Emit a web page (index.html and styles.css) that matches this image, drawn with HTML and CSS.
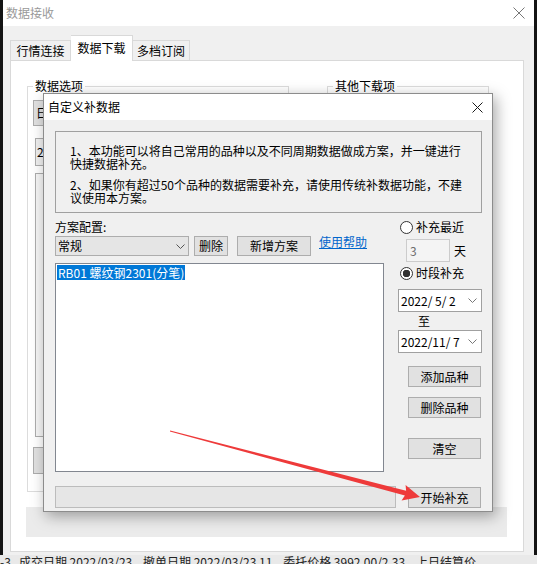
FILE: index.html
```html
<!DOCTYPE html>
<html lang="zh-CN">
<head>
    <meta charset="UTF-8">
    <title>数据接收</title>
    <link rel="stylesheet" href="styles.css">
</head>
<body>
    <div class="window">
        <div class="win-title">
            <span>数据接收</span>
            <svg class="win-close" width="12" height="12" viewBox="0 0 12 12">
                <path d="M0.5 0.5L11.5 11.5M11.5 0.5L0.5 11.5" stroke="#777" stroke-width="1"/>
            </svg>
        </div>
        <div class="tabs">
            <div class="tab tab-1">行情连接</div>
            <div class="tab tab-2 active">数据下载</div>
            <div class="tab tab-3">多档订阅</div>
        </div>
        <div class="panel">
            <div class="groups">
                <fieldset class="group group-data">
                    <legend>数据选项</legend>
                    <div class="g-btn">日线数据</div>
                    <div class="g-date">2022/ 5/ 2</div>
                    <div class="g-list"></div>
                    <div class="g-btn g-btn-low"></div>
                </fieldset>
                <fieldset class="group group-other">
                    <legend>其他下载项</legend>
                </fieldset>
            </div>
            <div class="progress"></div>
        </div>
    </div>
    <div class="behind">
        <span>-3&nbsp;&nbsp;&nbsp;成交日期 2022/03/23&nbsp;&nbsp;&nbsp;&nbsp;撤单日期 2022/03/23 11&nbsp;&nbsp;&nbsp;&nbsp;委托价格 3992.00/2.33&nbsp;&nbsp;&nbsp;&nbsp;上日结算价</span>
    </div>

    <div class="dialog">
        <div class="dlg-title">
            <span>自定义补数据</span>
            <svg width="11" height="11" viewBox="0 0 11 11">
                <path d="M0.5 0.5L10.5 10.5M10.5 0.5L0.5 10.5" stroke="#1a1a1a" stroke-width="1"/>
            </svg>
        </div>
        <div class="dlg-body">
            <div class="notice">
                <p>1、本功能可以将自己常用的品种以及不同周期数据做成方案，并一键进行<br>快捷数据补充。</p>
                <p>2、如果你有超过50个品种的数据需要补充，请使用传统补数据功能，不建<br>议使用本方案。</p>
            </div>
            <div class="main">
                <div class="left-col">
                    <div class="field-label">方案配置:</div>
                    <div class="combo-row">
                        <div class="combo">
                            <span>常规</span>
                            <svg width="9" height="5" viewBox="0 0 9 5"><path d="M0.5 0.5L4.5 4.5L8.5 0.5" fill="none" stroke="#555" stroke-width="1"/></svg>
                        </div>
                        <div class="btn btn-del">删除</div>
                        <div class="btn btn-new">新增方案</div>
                        <a class="help-link" href="#">使用帮助</a>
                    </div>
                    <div class="list">
                        <span class="list-item">RB01 螺纹钢2301(分笔)</span>
                    </div>
                    <div class="status"></div>
                </div>
                <div class="right-col">
                    <div class="radio-row">
                        <span class="radio"></span>
                        <span>补充最近</span>
                    </div>
                    <div class="days-row">
                        <div class="days-input">3</div>
                        <span>天</span>
                    </div>
                    <div class="radio-row radio-row-2">
                        <span class="radio checked"></span>
                        <span>时段补充</span>
                    </div>
                    <div class="date date-from">
                        <span>2022/ 5/ 2</span>
                        <svg width="9" height="5" viewBox="0 0 9 5"><path d="M0.5 0.5L4.5 4.5L8.5 0.5" fill="none" stroke="#777" stroke-width="1"/></svg>
                    </div>
                    <div class="date-to-label">至</div>
                    <div class="date date-to">
                        <span>2022/11/ 7</span>
                        <svg width="9" height="5" viewBox="0 0 9 5"><path d="M0.5 0.5L4.5 4.5L8.5 0.5" fill="none" stroke="#777" stroke-width="1"/></svg>
                    </div>
                    <div class="btn side-btn btn-add">添加品种</div>
                    <div class="btn side-btn btn-remove">删除品种</div>
                    <div class="btn side-btn btn-clear">清空</div>
                    <div class="btn side-btn btn-start">开始补充</div>
                </div>
            </div>
        </div>
    </div>

    <svg class="arrow" width="537" height="564" viewBox="0 0 537 564">
        <polygon points="170.1,430.5 406.1,490.8 405.6,484.9 420,497 401.6,500.4 404.9,495.6 169.9,431.5" fill="#ee3a3a"/>
    </svg>
</body>
</html>
```

FILE: styles.css
```css
* {
    margin: 0;
    padding: 0;
    box-sizing: border-box;
    font-family: "Noto Sans CJK SC", "Microsoft YaHei", sans-serif;
}

body {
    width: 537px;
    height: 564px;
    overflow: hidden;
    background-color: #141414;
    position: relative;
    font-size: 12px;
    color: #000;
}

/* outer window */
.window {
    margin-left: 3px;
    width: 531px;
    height: 555px;
    background-color: #f0f0f0;
    display: flex;
    flex-direction: column;
}

.win-title {
    height: 26px;
    background-color: #fff;
    display: flex;
    align-items: center;
    justify-content: space-between;
    padding: 0 9px 0 3px;
    color: #999;
    line-height: 14px;
}

.tabs {
    height: 34px;
    display: flex;
    align-items: flex-end;
    padding-left: 7px;
}

.tab {
    height: 20px;
    border: 1px solid #d9d9d9;
    border-bottom: none;
    background-color: #f0f0f0;
    display: flex;
    align-items: center;
    justify-content: center;
    line-height: 14px;
}

.tab-1 { width: 61px; }
.tab-2 { width: 62px; }
.tab-3 { width: 57px; border-left: none; }

.tab.active {
    height: 26px;
    background-color: #fff;
    margin-bottom: -1px;
    position: relative;
    z-index: 1;
    border-left: none;
    padding-bottom: 2px;
}

.panel {
    margin-left: 7px;
    width: 514px;
    height: 492px;
    background-color: #fff;
    border: 1px solid #d9d9d9;
    padding: 18px 0 0 16px;
}

.groups {
    display: flex;
    align-items: flex-start;
}

.group {
    border: 1px solid #dcdcdc;
    padding: 0 5px;
    height: 413px;
}

.group legend {
    padding: 0 2px;
    line-height: 14px;
}

.group-data {
    width: 262px;
}

.group-other {
    width: 162px;
    margin-left: 38px;
}

.g-btn {
    margin-top: 7px;
    width: 70px;
    height: 26px;
    background-color: #e1e1e1;
    border: 1px solid #adadad;
    padding-left: 2px;
    line-height: 24px;
}

.g-btn-low {
    margin-top: 10px;
    height: 27px;
}

.g-date {
    margin: 12px 0 0 2px;
    width: 120px;
    height: 28px;
    border: 1px solid #adadad;
    background-color: #f0f0f0;
    padding-left: 1px;
    line-height: 26px;
    white-space: pre;
}

.g-list {
    margin: 7px 0 0 2px;
    width: 240px;
    height: 264px;
    border: 1px solid #adadad;
    background-color: #f6f6f6;
}

.progress {
    margin: 15px 0 0 -1px;
    width: 481px;
    height: 30px;
    background-color: #ebebeb;
}

.behind {
    height: 9px;
    background-color: #e9e9e9;
    overflow: hidden;
    white-space: nowrap;
    line-height: 12px;
    color: #222;
}

.behind span {
    display: block;
    margin-top: 1px;
}

/* dialog */
.dialog {
    position: absolute;
    left: 43px;
    top: 93px;
    width: 450px;
    height: 419px;
    background-color: #f0f0f0;
    border: 1px solid #8c8c8c;
    box-shadow: 3px 4px 14px rgba(0, 0, 0, 0.35);
    display: flex;
    flex-direction: column;
}

.dlg-title {
    height: 26px;
    background-color: #fff;
    display: flex;
    align-items: center;
    justify-content: space-between;
    padding: 0 9px 0 4px;
    line-height: 14px;
}

.dlg-body {
    padding: 11px 10px 0 11px;
}

.notice {
    height: 82px;
    border: 1px solid #a0a0a0;
    padding: 12px 0 0 14px;
    line-height: 13px;
    white-space: nowrap;
}

.notice p + p {
    margin-top: 8px;
}

.main {
    display: flex;
    margin-top: 7px;
}

.left-col {
    width: 341px;
}

.field-label {
    height: 14px;
    line-height: 14px;
}

.combo-row {
    display: flex;
    align-items: flex-start;
    margin-top: 2px;
    height: 20px;
}

.combo {
    width: 134px;
    height: 20px;
    background-color: #e5e5e5;
    border: 1px solid #adadad;
    display: flex;
    align-items: center;
    justify-content: space-between;
    padding: 0 3px 0 2px;
    line-height: 14px;
}

.btn {
    height: 20px;
    background-color: #e1e1e1;
    border: 1px solid #adadad;
    display: flex;
    align-items: center;
    justify-content: center;
    line-height: 14px;
}

.btn-del {
    width: 34px;
    margin-left: 5px;
}

.btn-new {
    width: 74px;
    margin-left: 9px;
}

.help-link {
    margin: -1px 0 0 8px;
    line-height: 14px;
    color: #0066cc;
    text-decoration: underline;
}

.list {
    margin-top: 7px;
    width: 329px;
    height: 209px;
    background-color: #fff;
    border: 1px solid #828790;
    padding: 0 1px;
}

.list-item {
    display: inline-block;
    background-color: #0078d7;
    color: #fff;
    line-height: 15px;
    padding: 0 1px;
}

.status {
    margin-top: 14px;
    width: 341px;
    height: 22px;
    background-color: #e6e6e6;
    border: 1px solid #bcbcbc;
}

.right-col {
    width: 84px;
    margin-left: 2px;
    display: flex;
    flex-direction: column;
}

.radio-row {
    display: flex;
    align-items: center;
    height: 14px;
    line-height: 14px;
    padding-left: 2px;
    gap: 3px;
}

.radio-row-2 {
    margin-top: 4px;
}

.radio {
    width: 13px;
    height: 13px;
    border-radius: 50%;
    border: 1px solid #333;
    background-color: #fff;
}

.radio.checked {
    background: radial-gradient(circle, #333 0 3.5px, #fff 4px);
}

.days-row {
    display: flex;
    align-items: center;
    margin-top: 5px;
    line-height: 14px;
}

.days-input {
    width: 44px;
    height: 23px;
    margin: 0 4px 0 8px;
    background-color: #f4f4f4;
    border: 1px solid #cccccc;
    color: #6d6d6d;
    padding-left: 3px;
    line-height: 21px;
}

.date {
    height: 23px;
    width: 84px;
    background-color: #fff;
    border: 1px solid #a0a0a0;
    display: flex;
    align-items: center;
    justify-content: space-between;
    padding: 0 4px 0 2px;
    white-space: pre;
    line-height: 14px;
}

.date-from {
    margin-top: 9px;
}

.date-to-label {
    margin-top: 2px;
    padding-left: 20px;
    line-height: 14px;
}

.date-to {
    margin-top: 2px;
}

.side-btn {
    width: 73px;
    height: 21px;
    margin-left: 10px;
}

.btn-add { margin-top: 13px; }
.btn-remove { margin-top: 10px; }
.btn-clear { margin-top: 20px; }
.btn-start { margin-top: auto; }

.arrow {
    position: absolute;
    left: 0;
    top: 0;
    pointer-events: none;
}
```
